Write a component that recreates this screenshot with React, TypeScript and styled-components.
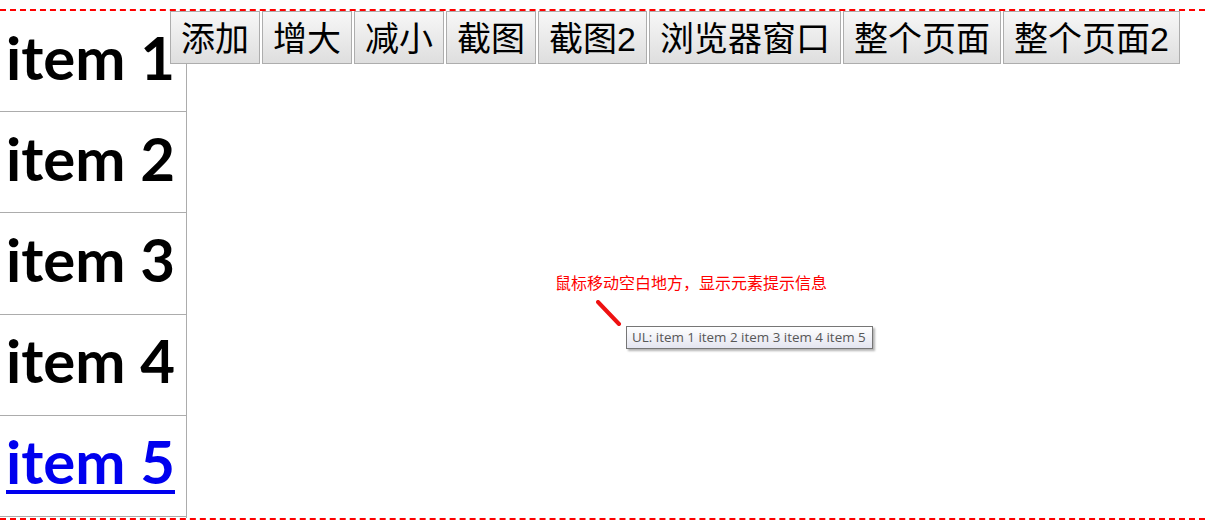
import styled, { createGlobalStyle } from 'styled-components';

const GlobalStyle = createGlobalStyle`
  html, body {
    margin: 0;
    padding: 0;
    background: #ffffff;
    font-family: "Liberation Sans", "Noto Sans CJK SC", sans-serif;
  }
`;

const Page = styled.div`
  position: relative;
  margin-top: 9px;
  border-top: 2px dashed #ff0000;
  border-bottom: 2px dashed #ff0000;
  display: flex;
  min-height: 507px;
`;

const ItemList = styled.ul`
  list-style: none;
  margin: 0;
  padding: 0;
  width: 186px;
  border-right: 1px solid #acacac;
  display: flex;
  flex-direction: column;
`;

const Item = styled.li`
  box-sizing: border-box;
  height: 101.2px;
  border-bottom: 1px solid #acacac;
  display: flex;
  align-items: center;
  padding: 0 0 9px 6px;
  font-family: Lato, "Open Sans", sans-serif;
  font-weight: 700;
  font-size: 60px;
  color: #000;

  a {
    color: #0000ee;
    text-decoration: underline;
    text-decoration-thickness: 4px;
    text-underline-offset: 6px;
  }
`;

const Stage = styled.div`
  flex: 1;
  display: flex;
  flex-direction: column;
  align-items: flex-start;
  padding: 262px 0 0 368px;
`;

const Toolbar = styled.div`
  position: absolute;
  top: 0;
  left: 170px;
  display: flex;
  gap: 2px;
`;

const Button = styled.button`
  font-family: "Liberation Sans", "Noto Sans CJK SC", sans-serif;
  font-size: 34px;
  line-height: 39px;
  height: 53px;
  padding: 8px 10px 4px;
  border: 1px solid #adadad;
  border-radius: 0;
  color: #000;
  background: linear-gradient(#f7f7f7, #dedede);
  cursor: pointer;
  white-space: nowrap;
`;

const Hint = styled.div`
  font-family: "Noto Sans CJK SC", sans-serif;
  font-size: 16px;
  line-height: 18px;
  color: #ff0000;
`;

const PointerRow = styled.div`
  display: flex;
  align-items: flex-end;
  margin: 9px 0 0 41px;
`;

const Tooltip = styled.div`
  margin-left: 4px;
  margin-bottom: -22px;
  padding: 2px 6px 3px 5px;
  font-family: "Open Sans", "Noto Sans", sans-serif;
  font-size: 13.4px;
  line-height: 16px;
  color: #575757;
  border: 1px solid #767676;
  background: linear-gradient(#ffffff, #e4e5f0);
  box-shadow: 2px 2px 2px rgba(0, 0, 0, 0.3);
  white-space: nowrap;
`;

const items = ['item 1', 'item 2', 'item 3', 'item 4'];
const buttons = ['添加', '增大', '减小', '截图', '截图2', '浏览器窗口', '整个页面', '整个页面2'];

export default function App() {
  return (
    <>
      <GlobalStyle />
      <Page>
        <ItemList>
          {items.map((t) => (
            <Item key={t}>{t}</Item>
          ))}
          <Item>
            <a href="#">item 5</a>
          </Item>
        </ItemList>
        <Stage>
          <Hint>鼠标移动空白地方，显示元素提示信息</Hint>
          <PointerRow>
            <svg width="26" height="27" viewBox="0 0 26 27">
              <path d="M2 2 L23 24" stroke="#ee1111" strokeWidth="4" strokeLinecap="round" />
            </svg>
            <Tooltip>UL: item 1 item 2 item 3 item 4 item 5</Tooltip>
          </PointerRow>
        </Stage>
        <Toolbar>
          {buttons.map((b) => (
            <Button key={b}>{b}</Button>
          ))}
        </Toolbar>
      </Page>
    </>
  );
}
